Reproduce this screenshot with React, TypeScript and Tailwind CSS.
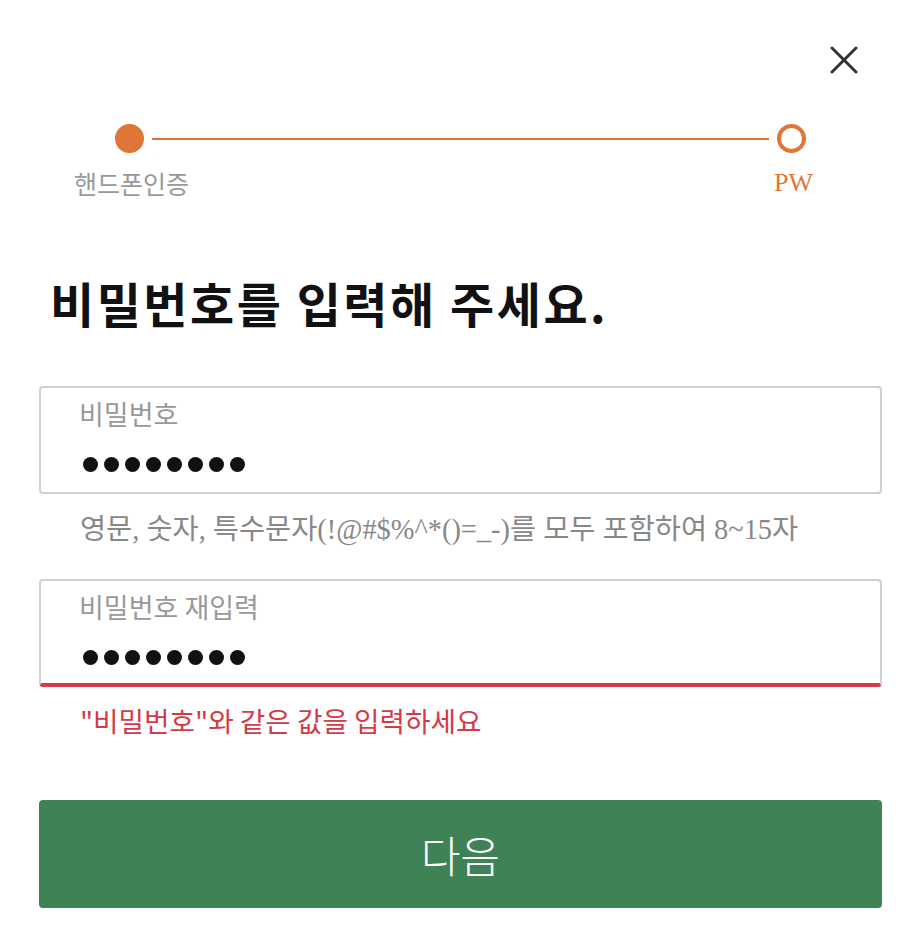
import React from "react";

const KR = { fontFamily: '"Noto Sans CJK KR", "Noto Sans", sans-serif' };
const SERIF = { fontFamily: '"Liberation Serif", "Noto Sans CJK KR", serif' };

function Dots() {
  return (
    <div className="flex gap-[6px]">
      {Array.from({ length: 8 }).map((_, i) => (
        <span key={i} className="block w-[15px] h-[15px] rounded-full bg-[#111]" />
      ))}
    </div>
  );
}

export default function App() {
  return (
    <div className="min-h-screen bg-white pl-[39px] pr-[40px]" style={KR}>
      <div className="flex justify-end pt-[46px] pr-[24px]">
        <button className="w-[28px] h-[28px]" aria-label="close">
          <svg width="28" height="28" viewBox="0 0 28 28" fill="none" stroke="#333" strokeWidth="3" strokeLinecap="round">
            <line x1="2" y1="2" x2="26" y2="26" />
            <line x1="26" y1="2" x2="2" y2="26" />
          </svg>
        </button>
      </div>

      <div className="mt-[50px] flex items-center gap-2 px-[76px]">
        <span className="block w-[29px] h-[29px] rounded-full bg-[#e07535]" />
        <span className="block flex-1 h-[2px] bg-[#e07535]" />
        <span className="block w-[29px] h-[29px] rounded-full border-[4px] border-[#e07535]" />
      </div>
      <div className="mt-[14px] flex justify-between pl-[35px] pr-[69px] leading-[32px]">
        <span className="text-[25px] text-[#999]">핸드폰인증</span>
        <span className="text-[26px] text-[#e07535]" style={SERIF}>PW</span>
      </div>

      <h1 className="mt-[75px] ml-[11px] text-[48px] tracking-[2.5px] font-bold text-[#111] leading-[56px]">
        비밀번호를 입력해 주세요.
      </h1>

      <div className="mt-[56px] h-[108px] border-2 border-[#d0d0d0] rounded-[4px] pl-[38px] pt-[8px]">
        <div className="text-[27px] text-[#999] leading-[36px]">비밀번호</div>
        <div className="mt-[25px] ml-[4px]">
          <Dots />
        </div>
      </div>
      <div className="mt-[18px] pl-[41px] text-[28.4px] text-[#888] leading-[36px]" style={SERIF}>
        영문, 숫자, 특수문자(!@#$%^*()=_-)를 모두 포함하여 8~15자
      </div>

      <div className="mt-[31px] h-[108px] border-2 border-b-[4px] border-[#d0d0d0] border-b-[#d43a47] rounded-[4px] pl-[38px] pt-[8px]">
        <div className="text-[27px] text-[#999] leading-[36px]">비밀번호 재입력</div>
        <div className="mt-[25px] ml-[4px]">
          <Dots />
        </div>
      </div>
      <div className="mt-[15px] pl-[41px] text-[27.7px] text-[#d43a47] leading-[36px]">
        "비밀번호"와 같은 값을 입력하세요
      </div>

      <button className="mt-[62px] w-full h-[108px] rounded-[4px] bg-[#3e8256] text-white text-[43px] font-light flex items-center justify-center">
        다음
      </button>
    </div>
  );
}
